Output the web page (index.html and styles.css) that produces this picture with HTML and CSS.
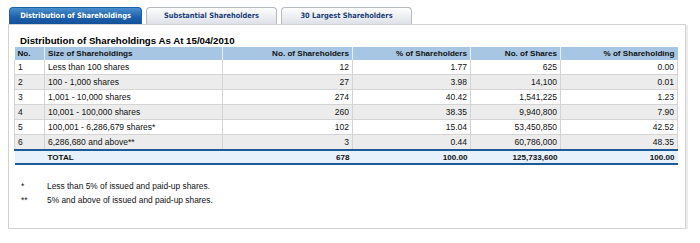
FILE: index.html
```html
<!DOCTYPE html>
<html>
<head>
<meta charset="utf-8">
<link rel="stylesheet" href="styles.css">
</head>
<body>
<div class="wrap">
  <div class="tabs">
    <div class="tab active">Distribution of Shareholdings</div>
    <div class="tab">Substantial Shareholders</div>
    <div class="tab">30 Largest Shareholders</div>
  </div>
  <div class="panel">
    <div class="title">Distribution of Shareholdings As At 15/04/2010</div>
    <table class="grid">
      <colgroup>
        <col class="c1"><col class="c2"><col class="c3"><col class="c4"><col class="c5"><col class="c6">
      </colgroup>
      <thead>
        <tr><th class="l">No.</th><th class="l">Size of Shareholdings</th><th>No. of Shareholders</th><th>% of Shareholders</th><th>No. of Shares</th><th>% of Shareholding</th></tr>
      </thead>
      <tbody>
        <tr><td class="l">1</td><td class="l">Less than 100 shares</td><td>12</td><td>1.77</td><td>625</td><td>0.00</td></tr>
        <tr class="alt"><td class="l">2</td><td class="l">100 - 1,000 shares</td><td>27</td><td>3.98</td><td>14,100</td><td>0.01</td></tr>
        <tr><td class="l">3</td><td class="l">1,001 - 10,000 shares</td><td>274</td><td>40.42</td><td>1,541,225</td><td>1.23</td></tr>
        <tr class="alt"><td class="l">4</td><td class="l">10,001 - 100,000 shares</td><td>260</td><td>38.35</td><td>9,940,800</td><td>7.90</td></tr>
        <tr><td class="l">5</td><td class="l">100,001 - 6,286,679 shares*</td><td>102</td><td>15.04</td><td>53,450,850</td><td>42.52</td></tr>
        <tr class="alt"><td class="l">6</td><td class="l">6,286,680 and above**</td><td>3</td><td>0.44</td><td>60,786,000</td><td>48.35</td></tr>
      </tbody>
      <tfoot>
        <tr><td class="l"></td><td class="l">TOTAL</td><td>678</td><td>100.00</td><td>125,733,600</td><td>100.00</td></tr>
      </tfoot>
    </table>
    <div class="notes">
      <div class="note"><span class="mark">*</span><span>Less than 5% of issued and paid-up shares.</span></div>
      <div class="note"><span class="mark">**</span><span>5% and above of issued and paid-up shares.</span></div>
    </div>
  </div>
</div>
</body>
</html>
```

FILE: styles.css
```css
html, body { margin: 0; padding: 0; background: #fff; }
body { font-family: "Liberation Sans", Arial, sans-serif; color: #111; }
.wrap { padding: 7px 0 0 8px; width: 680px; }
.tabs { display: flex; gap: 4px; padding-left: 1px; height: 17px; }
.tab {
  width: 131px; height: 17px; box-sizing: border-box;
  border: 1px solid #b5b9c2; border-bottom: none;
  border-radius: 4px 4px 0 0;
  background: linear-gradient(#fdfdfd, #eceef2 55%, #dde1e7);
  color: #1b3d7a; font-family: "DejaVu Sans Condensed", "DejaVu Sans", sans-serif;
  font-stretch: semi-condensed; font-weight: bold;
  font-size: 7.4px; text-align: center; line-height: 16px;
}
.tab.active {
  width: 133px; border-color: #1e5fa5;
  background: linear-gradient(#4b8fce, #1f62ab 55%, #13509a);
  color: #fff;
}
.panel {
  width: 678px; height: 205px; box-sizing: border-box;
  border: 1px solid #d2d2d2; box-shadow: 2px 1px 0 #ececec;
  padding: 10px 0 0 5px;
}
.title { font-weight: bold; font-size: 9.7px; padding-left: 6px; height: 12px; line-height: 12px; color: #000; }
.grid { border-collapse: collapse; width: 663px; table-layout: fixed; font-size: 8.5px; }
.c1 { width: 30px; }
.c2 { width: 178px; }
.c3 { width: 130px; }
.c4 { width: 118px; }
.c5 { width: 90px; }
.c6 { width: 117px; }
.grid th { background: #a7c6e3; font-weight: bold; font-size: 8.1px; height: 13px; padding: 0 3px; text-align: right; border-left: 1px solid #e6eef7; color: #111; }
.grid th:first-child { border-left: none; }
.grid td { height: 14px; padding: 0 3px; text-align: right; border: 1px solid #d4d4d4; border-top: none; }
.grid tbody td { border-bottom: 1px solid #d4d4d4; }
.grid .l { text-align: left; }
.grid tr.alt td { background: #ececec; }
.grid tfoot td { background: #e6f1fb; font-weight: bold; font-size: 8.1px; border: none; border-top: 2px solid #1d5a9a; border-bottom: 2px solid #1d5a9a; height: 12px; }
.notes { margin-top: 14px; font-size: 8.4px; padding-left: 7px; }
.note { display: flex; height: 14px; line-height: 14px; }
.mark { width: 26px; }
```
